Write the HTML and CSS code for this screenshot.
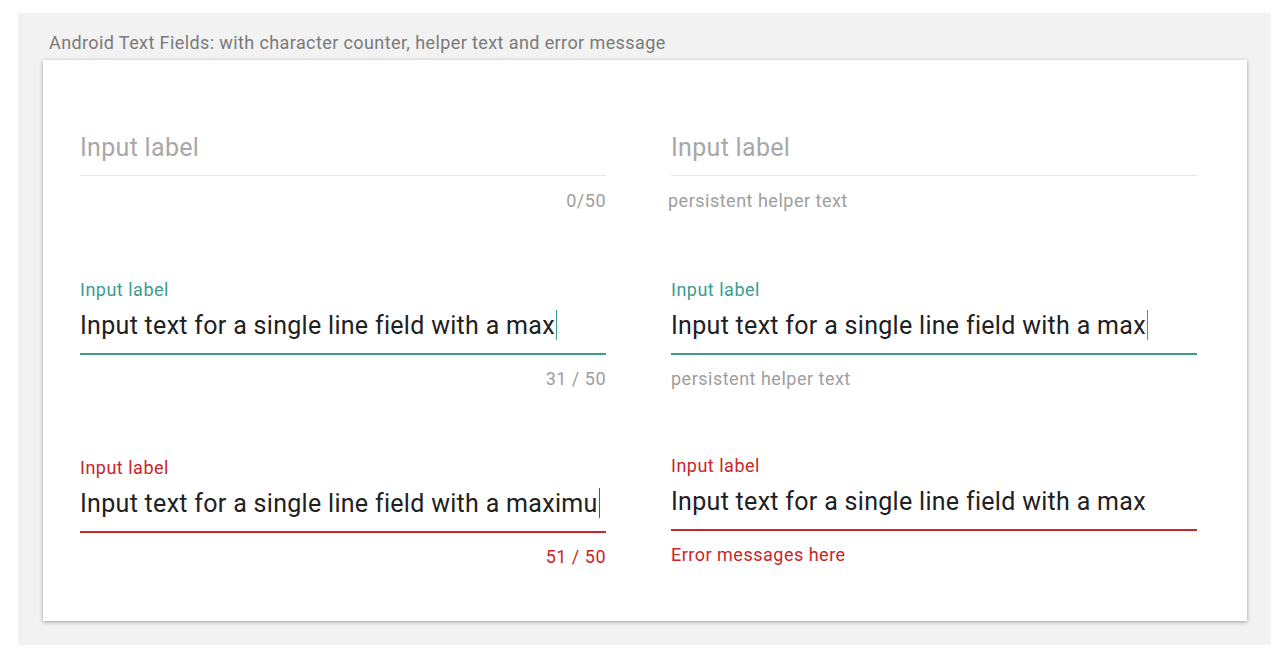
FILE: index.html
```html
<!DOCTYPE html>
<html>
<head>
<meta charset="utf-8">
<link rel="stylesheet" href="styles.css">
</head>
<body>
<div class="frame">
  <div class="title">Android Text Fields: with character counter, helper text and error message</div>
  <div class="card">
    <div class="grid">
      <div class="field">
        <div class="label hidden">Input label</div>
        <div class="input placeholder">Input label</div>
        <div class="line"></div>
        <div class="helper right">0/50</div>
      </div>
      <div class="field">
        <div class="label hidden">Input label</div>
        <div class="input placeholder">Input label</div>
        <div class="line"></div>
        <div class="helper helper-left">persistent helper text</div>
      </div>

      <div class="field focus">
        <div class="label">Input label</div>
        <div class="input">Input text for a single line field with a max<span class="caret"></span></div>
        <div class="line"></div>
        <div class="helper right">31 / 50</div>
      </div>
      <div class="field focus">
        <div class="label">Input label</div>
        <div class="input">Input text for a single line field with a max<span class="caret"></span></div>
        <div class="line"></div>
        <div class="helper">persistent helper text</div>
      </div>

      <div class="field error">
        <div class="label">Input label</div>
        <div class="input">Input text for a single line field with a maximu<span class="caret"></span></div>
        <div class="line"></div>
        <div class="helper right">51 / 50</div>
      </div>
      <div class="field error shift">
        <div class="label">Input label</div>
        <div class="input">Input text for a single line field with a max</div>
        <div class="line"></div>
        <div class="helper">Error messages here</div>
      </div>
    </div>
  </div>
</div>
</body>
</html>
```

FILE: styles.css
```css
html, body {
  margin: 0;
  padding: 0;
  background: #ffffff;
  font-family: Roboto, "Liberation Sans", Arial, sans-serif;
}

.frame {
  margin: 13px 0 0 18px;
  width: 1253px;
  height: 632px;
  background: #f2f2f2;
  box-sizing: border-box;
  padding: 20px 0 0 25px;
}

.title {
  font-size: 18px;
  line-height: 20px;
  color: #7a7a7a;
  padding-left: 6px;
  letter-spacing: 0.4px;
}

.card {
  margin-top: 7px;
  width: 1204px;
  height: 561px;
  background: #ffffff;
  box-shadow: 0 1px 4px rgba(0, 0, 0, 0.35);
  box-sizing: border-box;
  padding: 40px 50px 0 37px;
}

.grid {
  display: grid;
  grid-template-columns: 526px 526px;
  column-gap: 65px;
  row-gap: 67px;
}

.field {
  display: flex;
  flex-direction: column;
}

.label {
  font-size: 18px;
  letter-spacing: 0.5px;
  line-height: 24px;
  height: 24px;
  color: #888;
}

.hidden {
  visibility: hidden;
}

.input {
  margin-top: 8px;
  font-size: 25px;
  letter-spacing: 0.3px;
  line-height: 32px;
  height: 32px;
  padding-bottom: 11px;
  color: #212121;
  white-space: nowrap;
}

.placeholder {
  color: #a8a8a8;
}

.line {
  height: 1px;
  background: #e6e6e6;
  margin-bottom: 1px;
}

.helper {
  margin-top: 14px;
  font-size: 18px;
  letter-spacing: 0.5px;
  line-height: 20px;
  height: 20px;
  color: #9e9e9e;
}

.helper-left {
  margin-left: -3px;
}

.right {
  text-align: right;
}

.caret {
  display: inline-block;
  width: 1px;
  height: 30px;
  margin-left: 1px;
  vertical-align: -6px;
  background: #3a9c90;
}

.focus .label {
  color: #3a9c90;
}

.focus .line {
  height: 2px;
  margin-bottom: 0;
  background: #3a9c90;
}

.error .label {
  color: #c9252a;
}

.error .line {
  height: 2px;
  margin-bottom: 0;
  background: #c9252a;
}

.error .helper {
  color: #c9252a;
}

.error .caret {
  background: #c9252a;
}

.shift {
  margin-top: -2px;
}
```
